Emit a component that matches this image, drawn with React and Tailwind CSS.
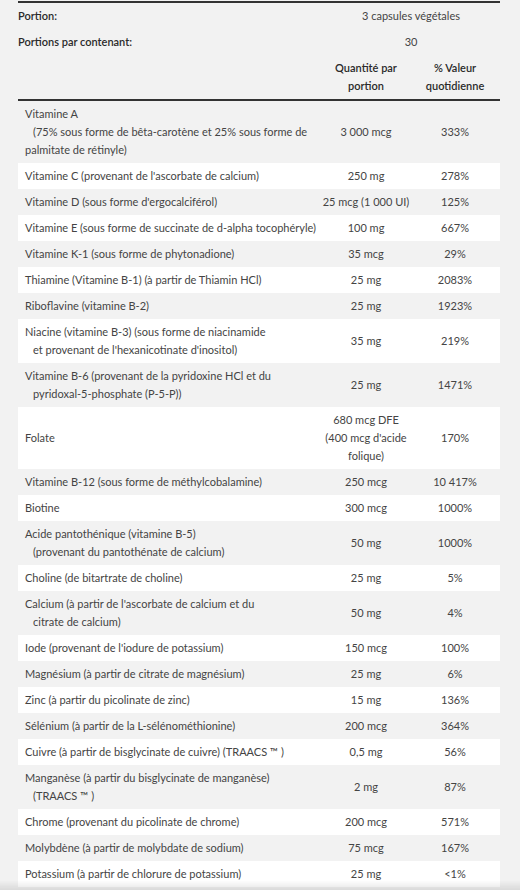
import React from "react";

// Each label is a list of lines; an "indent" line is pushed in a little as on the label.
const ROWS = [
  {
    label: [
      "Vitamine A",
      { t: "(75% sous forme de bêta-carotène et 25% sous forme de", indent: true },
      "palmitate de rétinyle)",
    ],
    qty: ["3 000 mcg"],
    dv: "333%",
  },
  { label: ["Vitamine C (provenant de l'ascorbate de calcium)"], qty: ["250 mg"], dv: "278%" },
  { label: ["Vitamine D (sous forme d'ergocalciférol)"], qty: ["25 mcg (1 000 UI)"], dv: "125%" },
  { label: ["Vitamine E (sous forme de succinate de d-alpha tocophéryle)"], qty: ["100 mg"], dv: "667%" },
  { label: ["Vitamine K-1 (sous forme de phytonadione)"], qty: ["35 mcg"], dv: "29%" },
  { label: ["Thiamine (Vitamine B-1) (à partir de Thiamin HCl)"], qty: ["25 mg"], dv: "2083%" },
  { label: ["Riboflavine (vitamine B-2)"], qty: ["25 mg"], dv: "1923%" },
  {
    label: [
      "Niacine (vitamine B-3) (sous forme de niacinamide",
      { t: "et provenant de l'hexanicotinate d'inositol)", indent: true },
    ],
    qty: ["35 mg"],
    dv: "219%",
  },
  {
    label: [
      "Vitamine B-6 (provenant de la pyridoxine HCl et du",
      { t: "pyridoxal-5-phosphate (P-5-P))", indent: true },
    ],
    qty: ["25 mg"],
    dv: "1471%",
  },
  { label: ["Folate"], qty: ["680 mcg DFE", "(400 mcg d'acide", "folique)"], dv: "170%" },
  { label: ["Vitamine B-12 (sous forme de méthylcobalamine)"], qty: ["250 mcg"], dv: "10 417%" },
  { label: ["Biotine"], qty: ["300 mcg"], dv: "1000%" },
  {
    label: [
      "Acide pantothénique (vitamine B-5)",
      { t: "(provenant du pantothénate de calcium)", indent: true },
    ],
    qty: ["50 mg"],
    dv: "1000%",
  },
  { label: ["Choline (de bitartrate de choline)"], qty: ["25 mg"], dv: "5%" },
  {
    label: [
      "Calcium (à partir de l'ascorbate de calcium et du",
      { t: "citrate de calcium)", indent: true },
    ],
    qty: ["50 mg"],
    dv: "4%",
  },
  { label: ["Iode (provenant de l'iodure de potassium)"], qty: ["150 mcg"], dv: "100%" },
  { label: ["Magnésium (à partir de citrate de magnésium)"], qty: ["25 mg"], dv: "6%" },
  { label: ["Zinc (à partir du picolinate de zinc)"], qty: ["15 mg"], dv: "136%" },
  { label: ["Sélénium (à partir de la L-sélénométhionine)"], qty: ["200 mcg"], dv: "364%" },
  { label: ["Cuivre (à partir de bisglycinate de cuivre) (TRAACS ™ )"], qty: ["0,5 mg"], dv: "56%" },
  {
    label: [
      "Manganèse (à partir du bisglycinate de manganèse)",
      { t: "(TRAACS ™ )", indent: true },
    ],
    qty: ["2 mg"],
    dv: "87%",
  },
  { label: ["Chrome (provenant du picolinate de chrome)"], qty: ["200 mcg"], dv: "571%" },
  { label: ["Molybdène (à partir de molybdate de sodium)"], qty: ["75 mcg"], dv: "167%" },
  { label: ["Potassium (à partir de chlorure de potassium)"], qty: ["25 mg"], dv: "<1%" },
];

function Label({ lines }) {
  return (
    <div>
      {lines.map((l, i) =>
        typeof l === "string" ? (
          <div key={i} className="whitespace-nowrap">{l}</div>
        ) : (
          <div key={i} className="whitespace-nowrap pl-[8px]">{l.t}</div>
        )
      )}
    </div>
  );
}

export default function App() {
  return (
    <div className="relative min-h-[890px] bg-[#f2f2f2] px-[18px] pt-[1px] font-['Lato','Liberation_Sans',sans-serif] text-[11px] leading-[18px] text-[#444]">
      <table className="w-[482px] table-fixed border-collapse">
        <colgroup>
          <col className="w-[304px]" />
          <col className="w-[88px]" />
          <col className="w-[90px]" />
        </colgroup>
        <thead>
          <tr className="border-t-2 border-[#333]">
            <th className="py-[4px] text-left font-semibold text-[#2a2a2a]">Portion:</th>
            <td colSpan={2} className="py-[4px] text-center">3 capsules végétales</td>
          </tr>
          <tr>
            <th className="py-[4px] text-left font-semibold text-[#2a2a2a]">Portions par contenant:</th>
            <td colSpan={2} className="py-[4px] text-center">30</td>
          </tr>
          <tr className="border-b-2 border-[#333]">
            <th />
            <th className="py-[4px] text-center font-semibold text-[#2a2a2a]">
              Quantité par
              <br />
              portion
            </th>
            <th className="py-[4px] text-center font-semibold text-[#2a2a2a]">
              % Valeur
              <br />
              quotidienne
            </th>
          </tr>
        </thead>
        <tbody>
          {ROWS.map((r, i) => (
            <tr key={i} className={i % 2 === 0 ? "bg-[#f2f2f2]" : "bg-white"}>
              <td className="py-[4px] pl-[7px] align-middle">
                <Label lines={r.label} />
              </td>
              <td className="py-[4px] text-center align-middle">
                {r.qty.map((q, j) => (
                  <div key={j} className="whitespace-nowrap">{q}</div>
                ))}
              </td>
              <td className="py-[4px] text-center align-middle">{r.dv}</td>
            </tr>
          ))}
        </tbody>
      </table>
      <div className="pointer-events-none fixed inset-x-0 bottom-0 h-[10px] bg-gradient-to-b from-transparent to-black/10" />
    </div>
  );
}
